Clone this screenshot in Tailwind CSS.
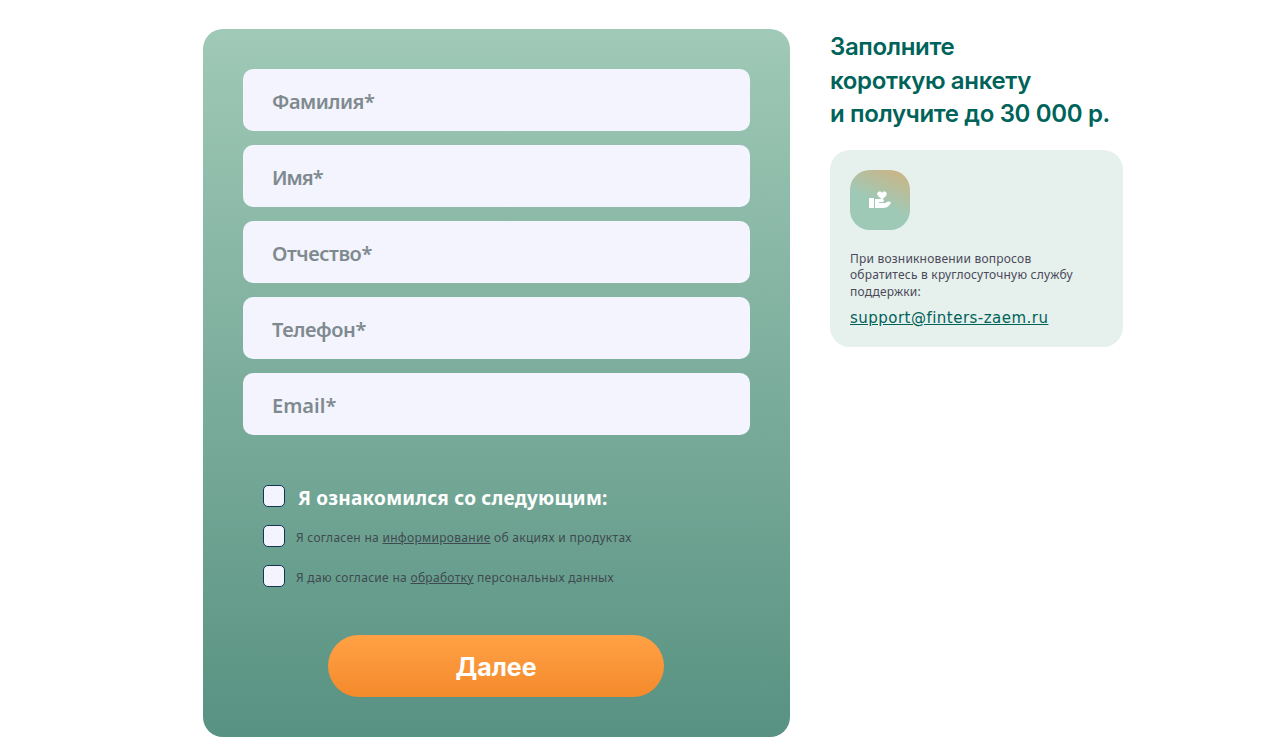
<!DOCTYPE html>
<html lang="ru"><head><meta charset="utf-8">
<script src="https://cdn.jsdelivr.net/npm/@tailwindcss/browser@4"></script>
</head>
<body class="bg-white overflow-hidden">
<main class="flex items-start gap-10 pl-[203px] pt-[29px] h-[756px] font-['Noto_Sans',sans-serif]">
  <form class="w-[587px] h-[708px] shrink-0 rounded-[20px] bg-gradient-to-b from-[#a0c9b7] to-[#589282] px-10 pt-10">
    <div class="flex flex-col gap-[14px]">
      <div class="h-[62px] rounded-[10px] bg-[#f3f4fd] pl-[29px] pt-[4px] flex items-center text-[20px] font-semibold tracking-[-0.5px] text-[#7f8a8f]">Фамилия*</div>
      <div class="h-[62px] rounded-[10px] bg-[#f3f4fd] pl-[29px] pt-[4px] flex items-center text-[20px] font-semibold tracking-[-1px] text-[#7f8a8f]">Имя*</div>
      <div class="h-[62px] rounded-[10px] bg-[#f3f4fd] pl-[29px] pt-[4px] flex items-center text-[20px] font-semibold tracking-[-0.45px] text-[#7f8a8f]">Отчество*</div>
      <div class="h-[62px] rounded-[10px] bg-[#f3f4fd] pl-[29px] pt-[4px] flex items-center text-[20px] font-semibold tracking-[-0.4px] text-[#7f8a8f]">Телефон*</div>
      <div class="h-[62px] rounded-[10px] bg-[#f3f4fd] pl-[29px] pt-[4px] flex items-center text-[20px] font-semibold text-[#7f8a8f]">Email*</div>
    </div>
    <div class="mt-[50px] pl-5 flex flex-col gap-[18px]">
      <div class="flex items-start h-[22px]">
        <span class="size-[22px] shrink-0 rounded-[5px] border border-[#12335a] bg-[#f3f4fd]"></span>
        <span class="ml-[13px] text-[19px] leading-[26px] tracking-[0.22px] font-bold text-white">Я ознакомился со следующим:</span>
      </div>
      <div class="flex items-start h-[22px]">
        <span class="size-[22px] shrink-0 rounded-[5px] border border-[#12335a] bg-[#f3f4fd]"></span>
        <span class="ml-[11px] text-[12px] leading-[26px] tracking-[0.29px] text-[#3f4a50]">Я согласен на <u>информирование</u> об акциях и продуктах</span>
      </div>
      <div class="flex items-start h-[22px]">
        <span class="size-[22px] shrink-0 rounded-[5px] border border-[#12335a] bg-[#f3f4fd]"></span>
        <span class="ml-[11px] text-[12px] leading-[26px] tracking-[0.29px] text-[#3f4a50]">Я даю согласие на <u>обработку</u> персональных данных</span>
      </div>
    </div>
    <div class="mt-[48px] flex justify-center pr-px">
      <button type="button" class="w-[336px] h-[62px] pt-[3px] rounded-full bg-gradient-to-b from-[#ffa144] to-[#f48a2c] text-white text-[25px] font-bold font-['Inter',sans-serif]">Далее</button>
    </div>
  </form>
  <aside class="w-[293px] shrink-0">
    <h1 class="pt-px text-[24px] leading-[33.5px] tracking-[-0.35px] font-semibold text-[#00635a] font-['Inter',sans-serif]">Заполните<br>короткую анкету<br>и получите до 30 000 р.</h1>
    <div class="mt-[19px] h-[197px] rounded-[20px] bg-[#e6f0ec] p-5">
      <div class="size-[60px] rounded-[20px] bg-[linear-gradient(25deg,#9fc9b7_45%,#d0b27f_100%)] flex items-center justify-center">
        <svg class="ml-[2px]" width="24" height="24" viewBox="0 0 24 24" fill="#fff">
          <rect x="0" y="10" width="5" height="10" rx="0.5"/>
          <path d="M6 11h7c1.3 0 1.900.8 1.900 1.600 0 .6-.3 1-.7 1.300H10v1.100h6l3.200-1.400c1.600-.5 3 .7 2.400 1.800C20 18.500 17 20 14 20H6z"/>
          <path d="M13 11.500 9.300 8.200C7.300 6.200 8.400 3.600 10.600 3.600c1 0 1.800.5 2.400 1.300.6-.8 1.400-1.300 2.400-1.300 2.200 0 3.300 2.600 1.300 4.600z"/>
        </svg>
      </div>
      <p class="mt-5 pt-px text-[12px] leading-[16.5px] tracking-[0.2px] text-[#4a4a5a]">При возникновении вопросов<br>обратитесь в круглосуточную службу<br>поддержки:</p>
      <a class="block mt-[8px] text-[15px] leading-[20px] tracking-[0.48px] underline text-[#00635a] font-['DejaVu_Sans',sans-serif]">support@finters-zaem.ru</a>
    </div>
  </aside>
</main>
</body></html>
